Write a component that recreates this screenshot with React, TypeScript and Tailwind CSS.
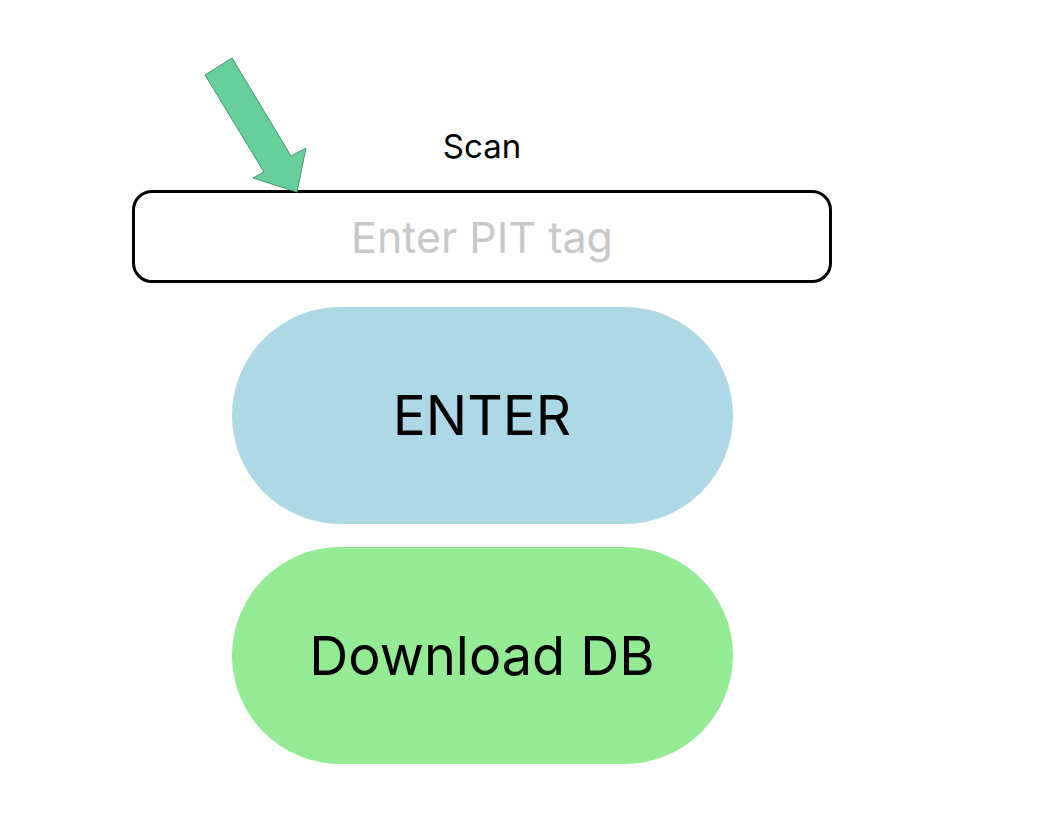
import { useState } from 'react';

export default function App() {
  const [tag, setTag] = useState('');

  return (
    <div className="relative min-h-[826px] w-[1050px] bg-white font-['Inter',sans-serif] text-black">
      <div className="ml-[132px] flex w-[700px] flex-col items-center pt-[127px]">
        <p className="h-[38px] text-[33px] leading-[38px]">Scan</p>
        <input
          type="text"
          value={tag}
          onChange={(e) => setTag(e.target.value)}
          placeholder="Enter PIT tag"
          className="mt-[25px] h-[93px] w-[700px] rounded-[20px] border-[3px] border-black bg-white text-center text-[43px] outline-none placeholder:text-[#c8c8c8]"
        />
        <button className="mt-[24px] flex h-[217px] w-[501px] items-center justify-center rounded-full bg-[#add8e6] text-[55px]">
          ENTER
        </button>
        <button className="mt-[23px] flex h-[217px] w-[501px] items-center justify-center rounded-full bg-[#94eb94] text-[54px]">
          Download DB
        </button>
      </div>

      {/* pointer arrow over the input */}
      <svg className="absolute left-0 top-0" width="320" height="200" viewBox="0 0 320 200">
        <polygon
          points="205,75 232,58 291,156 306,148 297,192 253,178 264,172"
          fill="#67cf9a"
          stroke="#3f9a6c"
          strokeWidth="1"
          strokeLinejoin="miter"
        />
      </svg>
    </div>
  );
}
